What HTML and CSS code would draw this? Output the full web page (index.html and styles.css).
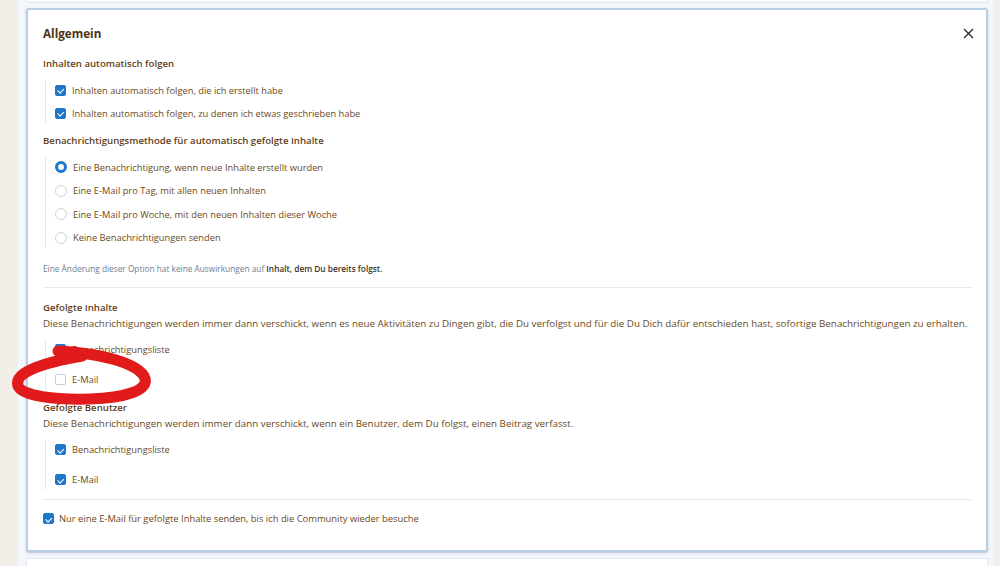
FILE: index.html
```html
<!DOCTYPE html>
<html lang="de">
<head>
  <meta charset="UTF-8">
  <meta name="viewport" content="width=device-width, initial-scale=1.0">
  <title>Benachrichtigungen</title>
  <link rel="stylesheet" href="styles.css">
</head>
<body>
  <div class="page">
    <div class="card-prev"></div>

    <section class="card">
      <div class="card-head">
        <h2>Allgemein</h2>
        <button class="btn-close" aria-label="Schließen">
          <svg width="11" height="11" viewBox="0 0 11 11"><path d="M1 1 L10 10 M10 1 L1 10" stroke="#2b2b2b" stroke-width="1.4" fill="none"/></svg>
        </button>
      </div>

      <h3 class="group-title first">Inhalten automatisch folgen</h3>
      <ul class="options">
        <li><span class="cb on"></span>Inhalten automatisch folgen, die ich erstellt habe</li>
        <li><span class="cb on"></span>Inhalten automatisch folgen, zu denen ich etwas geschrieben habe</li>
      </ul>

      <h3 class="group-title">Benachrichtigungsmethode für automatisch gefolgte Inhalte</h3>
      <ul class="options radios">
        <li><span class="radio on"></span>Eine Benachrichtigung, wenn neue Inhalte erstellt wurden</li>
        <li><span class="radio"></span>Eine E-Mail pro Tag, mit allen neuen Inhalten</li>
        <li><span class="radio"></span>Eine E-Mail pro Woche, mit den neuen Inhalten dieser Woche</li>
        <li><span class="radio"></span>Keine Benachrichtigungen senden</li>
      </ul>

      <p class="hint">Eine Änderung dieser Option hat keine Auswirkungen auf <strong>Inhalt, dem Du bereits folgst.</strong></p>

      <hr class="sep">

      <h3 class="group-title after-sep">Gefolgte Inhalte</h3>
      <p class="desc">Diese Benachrichtigungen werden immer dann verschickt, wenn es neue Aktivitäten zu Dingen gibt, die Du verfolgst und für die Du Dich dafür entschieden hast, sofortige Benachrichtigungen zu erhalten.</p>
      <ul class="options wide">
        <li><span class="cb on"></span>Benachrichtigungsliste</li>
        <li><span class="cb"></span>E-Mail</li>
      </ul>

      <h3 class="group-title">Gefolgte Benutzer</h3>
      <p class="desc">Diese Benachrichtigungen werden immer dann verschickt, wenn ein Benutzer, dem Du folgst, einen Beitrag verfasst.</p>
      <ul class="options wide">
        <li><span class="cb on"></span>Benachrichtigungsliste</li>
        <li><span class="cb on"></span>E-Mail</li>
      </ul>

      <hr class="sep sep-bottom">

      <div class="single"><span class="cb on"></span>Nur eine E-Mail für gefolgte Inhalte senden, bis ich die Community wieder besuche</div>
    </section>

    <div class="card-next"></div>
  </div>

  <!-- Markierung von Hand -->
  <svg class="marker" width="1000" height="566" viewBox="0 0 1000 566">
    <path d="M58 351 C 95 353, 134 361, 144 376 C 152 391, 122 398, 90 399 C 55 400, 22 396, 18 386 C 14 374, 36 364, 82 356" stroke="#e11b1b" stroke-width="11" fill="none" stroke-linecap="round"/>
  </svg>
</body>
</html>
```

FILE: styles.css
```css
body {
  margin: 0;
  background-color: #f2eee8;
  font-family: 'Open Sans', 'Noto Sans', Arial, sans-serif;
  color: #6b4a22;
  overflow: hidden;
}
.page {
  margin-left: 18px;
  width: 975px;
  height: 566px;
  background-color: #f3f6fa;
  padding-left: 8px;
  box-sizing: border-box;
}
.card-prev {
  width: 962px;
  height: 3px;
  background-color: #f8fafc;
  border: 1px solid #dfe6ee;
  border-top: none;
  box-sizing: border-box;
}
.card {
  width: 962px;
  margin-top: 5px;
  background-color: #fff;
  border: 2px solid #b7cfe6;
  border-radius: 3px;
  box-shadow: 0 1px 2px rgba(70, 100, 140, 0.35);
  padding: 13px 14px 21px 15px;
  box-sizing: border-box;
}
.card-next {
  width: 962px;
  height: 12px;
  margin-top: 6px;
  background-color: #fff;
  border: 1px solid #dfe6ee;
  box-sizing: border-box;
}
/* Kopfzeile */
.card-head {
  display: flex;
  justify-content: space-between;
  align-items: center;
  height: 20px;
}
.card-head h2 {
  margin: 0;
  font-size: 11.7px;
  font-weight: 700;
  color: #4f3313;
}
.btn-close {
  border: none;
  background: none;
  padding: 0;
  margin-right: -2px;
  width: 11px;
  height: 11px;
  display: flex;
  cursor: pointer;
}
.group-title {
  margin: 10px 0 0;
  font-size: 9.65px;
  font-weight: 600;
  line-height: 16px;
  color: #5f4019;
}
.group-title.first {
  margin-top: 13px;
}
.group-title.after-sep {
  margin-top: 12px;
}
/* Optionslisten mit Linie links */
.options {
  list-style: none;
  margin: 8px 0 0 2px;
  padding: 0 0 0 9px;
  border-left: 1px solid #e6e8eb;
  display: flex;
  flex-direction: column;
  gap: 3px;
}
.options.radios {
  gap: 3.67px;
}
.options.wide {
  gap: 10px;
}
.options li,
.single {
  display: flex;
  align-items: center;
  gap: 6px;
  height: 20px;
  font-size: 9.3px;
  white-space: nowrap;
}
.single {
  margin-top: 9px;
  gap: 5px;
  font-size: 9.4px;
}
.cb {
  position: relative;
  flex: none;
  width: 11px;
  height: 11px;
  border: 1px solid #c7cdd5;
  border-radius: 2px;
  background-color: #fff;
  box-sizing: border-box;
}
.cb.on {
  background-color: #1f77c9;
  border-color: #1f77c9;
}
.cb.on::after {
  content: "";
  position: absolute;
  left: 3px;
  top: 1.5px;
  width: 2.5px;
  height: 4.5px;
  border: solid #fff;
  border-width: 0 1.5px 1.5px 0;
  transform: rotate(45deg);
}
.radio {
  flex: none;
  width: 12px;
  height: 12px;
  border: 1px solid #cdd2d9;
  border-radius: 50%;
  background-color: #fff;
  box-sizing: border-box;
}
.radio.on {
  border: 3.5px solid #1f77c9;
}
.hint {
  margin: 14px 0 0;
  font-size: 8.3px;
  line-height: 14px;
  color: #6f7d92;
}
.hint strong {
  font-weight: 600;
  color: #3c3226;
}
.sep {
  margin: 11px 0 0;
  border: none;
  border-top: 1px solid #e8ebef;
}
.sep-bottom {
  margin-top: 9px;
}
.desc {
  margin: 0;
  font-size: 9.82px;
  line-height: 16px;
  white-space: nowrap;
}
.marker {
  position: absolute;
  left: 0;
  top: 0;
  pointer-events: none;
}
```
